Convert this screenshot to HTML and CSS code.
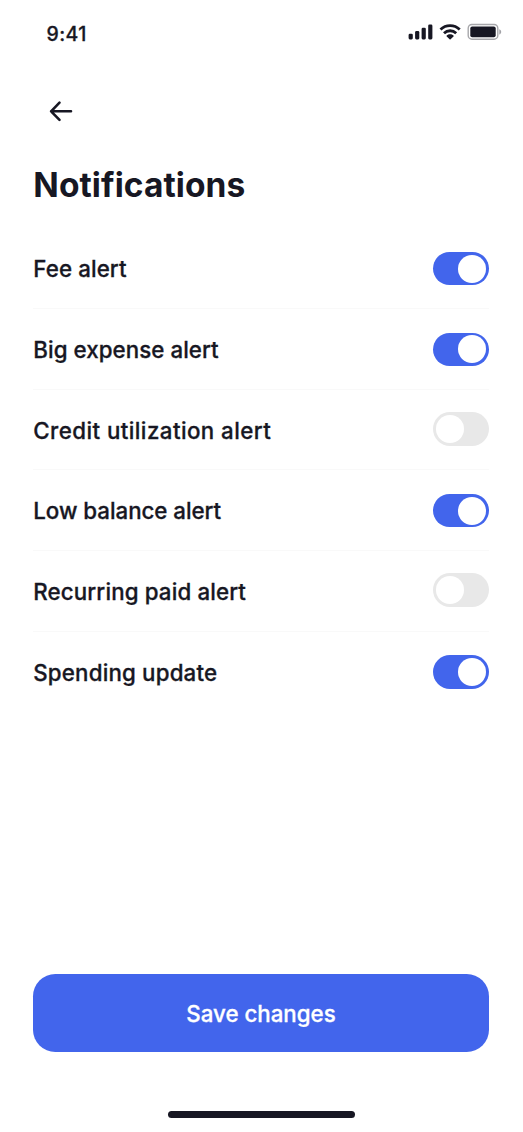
FILE: index.html
```
<!DOCTYPE html>
<html lang="en">
<head>
<meta charset="utf-8">
<title>Notifications</title>
<link rel="stylesheet" href="styles.css">
</head>
<body>
<main class="screen">
  <header class="status">
    <span class="time">9:41</span>
    <svg class="indicators" width="94" height="18" viewBox="0 0 94 18" aria-hidden="true">
      <g fill="#171723">
        <rect x="0.6" y="10.8" width="4.2" height="5.6" rx="1.3"/>
        <rect x="7.1" y="8" width="4.2" height="8.4" rx="1.3"/>
        <rect x="13.6" y="4.7" width="4.2" height="11.7" rx="1.3"/>
        <rect x="20.2" y="1.5" width="4.2" height="14.9" rx="1.3"/>
        <path d="M42.1 11.2c1.3 0 2.5.5 3.4 1.3.3.2.3.6 0 .9l-2.9 2.8c-.3.3-.7.3-1 0l-2.9-2.8c-.3-.3-.3-.7 0-.9.9-.8 2.1-1.3 3.4-1.3z"/>
      </g>
      <g fill="none" stroke="#171723" stroke-width="2.8">
        <path d="M32.5 6.4a13.9 13.9 0 0 1 19.2 0"/>
        <path d="M36 10.2a8.8 8.8 0 0 1 12.2 0"/>
      </g>
      <rect x="60.2" y="1.5" width="29.6" height="14.7" rx="3.7" fill="none" stroke="#171723" stroke-opacity=".38" stroke-width="1.4"/>
      <rect x="62.3" y="3.5" width="25.4" height="10.7" rx="1.9" fill="#171723"/>
      <path d="M91.3 6.2v5.4c1.1-.5 1.9-1.5 1.9-2.7s-.8-2.2-1.9-2.7z" fill="#171723" fill-opacity=".4"/>
    </svg>
  </header>
  <nav class="nav">
    <svg width="24" height="22" viewBox="0 0 24 22" fill="none" stroke="#171723" stroke-width="2.6" stroke-linecap="round" stroke-linejoin="round" role="img" aria-label="Back">
      <path d="M22 11.3H2.1M10.5 2.6L2.1 11.3l8.4 8.600"/>
    </svg>
  </nav>
  <h1 class="title">Notifications</h1>
  <ul class="list">
    <li class="row"><span class="label fee">Fee alert</span><span class="toggle on"></span></li>
    <li class="row"><span class="label expense">Big expense alert</span><span class="toggle on"></span></li>
    <li class="row"><span class="label credit">Credit utilization alert</span><span class="toggle"></span></li>
    <li class="row"><span class="label balance">Low balance alert</span><span class="toggle on"></span></li>
    <li class="row"><span class="label recurring">Recurring paid alert</span><span class="toggle"></span></li>
    <li class="row"><span class="label spending">Spending update</span><span class="toggle on"></span></li>
  </ul>
  <button class="save" type="button">Save changes</button>
  <div class="home"></div>
</main>
</body>
</html>
```
FILE: styles.css
```
* { box-sizing: border-box; }
body {
  margin: 0;
  background: #fff;
  color: #171723;
  font-family: Inter, "Liberation Sans", sans-serif;
}
.screen {
  display: flex;
  flex-direction: column;
  width: 523px;
  height: 1132px;
  padding: 0 34.3px 14px 33.3px;
}
.status {
  display: flex;
  justify-content: space-between;
  height: 61px;
  margin-right: -13.3px;
  padding: 23px 0 0 13.3px;
}
.time {
  font-size: 19.5px;
  font-weight: 500;
  line-height: 22px;
  letter-spacing: 0.4px;
  -webkit-text-stroke: 0.3px currentColor;
}
.nav {
  height: 61px;
  padding: 39px 0 0 15.7px;
}
.nav svg, .indicators { display: block; }
.title {
  margin: 40.5px 0 0;
  height: 44px;
  font-size: 33.5px;
  font-weight: 700;
  line-height: 44px;
  letter-spacing: 0.07px;
}
.list {
  margin: 21.8px 0 0;
  padding: 0;
  list-style: none;
}
.row {
  display: flex;
  justify-content: space-between;
  align-items: center;
  height: 80.7px;
  border-bottom: 1.4px solid #f9f9f9;
}
.row:last-child { border-bottom-color: transparent; }
.label {
  padding-top: 2px;
  font-size: 22.3px;
  font-weight: 500;
  line-height: 30px;
  -webkit-text-stroke: 0.3px currentColor;
}
.fee { letter-spacing: 0.1px; }
.expense { letter-spacing: 0.06px; }
.credit { letter-spacing: 0.43px; }
.balance { letter-spacing: -0.03px; }
.recurring { letter-spacing: 0.13px; }
.spending { letter-spacing: 0.17px; }
.toggle {
  display: flex;
  align-items: center;
  width: 55.8px;
  height: 33.5px;
  margin-bottom: 1.5px;
  padding: 0 2.8px;
  border-radius: 17px;
  background: #e8e8e8;
}
.toggle::before {
  content: "";
  width: 28px;
  height: 28px;
  border-radius: 50%;
  background: #fff;
}
.toggle.on {
  justify-content: flex-end;
  margin: 1px 0 0;
  background: #4265ec;
}
.save {
  height: 78px;
  margin: auto 0 58.8px;
  padding: 1px 0 0;
  border: 0;
  border-radius: 22.3px;
  background: #4265ec;
  color: #fff;
  font: 500 22.3px/30px Inter, "Liberation Sans", sans-serif;
  -webkit-text-stroke: 0.3px currentColor;
}
.home {
  align-self: center;
  width: 187px;
  height: 7px;
  border-radius: 4px;
  background: #171723;
}
```
